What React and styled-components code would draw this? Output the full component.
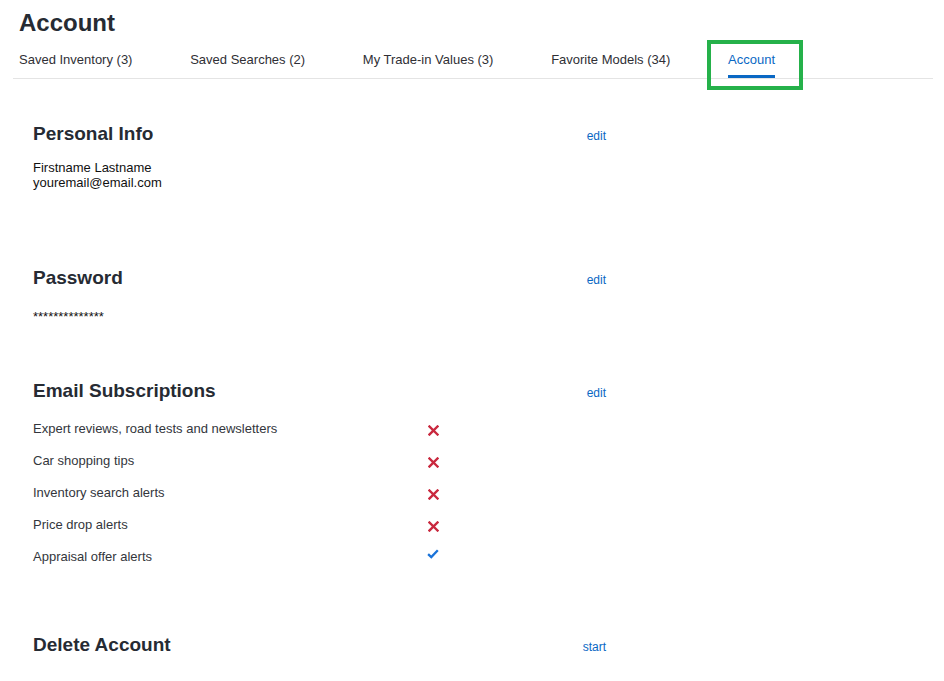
import React from "react";
import styled, { createGlobalStyle } from "styled-components";

const blue = "#0a68c4";
const ink = "#262b33";

const GlobalStyle = createGlobalStyle`
  html, body {
    margin: 0;
    padding: 0;
    background: #fff;
    font-family: "Liberation Sans", Arial, sans-serif;
    color: #222;
  }
`;

const tabs = [
  { label: "Saved Inventory (3)" },
  { label: "Saved Searches (2)" },
  { label: "My Trade-in Values (3)" },
  { label: "Favorite Models (34)" },
  { label: "Account", active: true },
];

const subscriptions = [
  { label: "Expert reviews, road tests and newsletters", on: false },
  { label: "Car shopping tips", on: false },
  { label: "Inventory search alerts", on: false },
  { label: "Price drop alerts", on: false },
  { label: "Appraisal offer alerts", on: true },
];

const Cross = () => (
  <svg width="11" height="11" viewBox="0 0 11 11">
    <path d="M1.5 1.5 L9.5 9.5 M9.5 1.5 L1.5 9.5" stroke="#c9283e" strokeWidth="2.4" strokeLinecap="square" />
  </svg>
);

const Check = () => (
  <svg width="14" height="12" viewBox="0 0 14 12">
    <path d="M1.3 6.2 L5 9.6 L12.6 1.6" stroke="#1a73d9" strokeWidth="2.7" fill="none" />
  </svg>
);

const App = () => {
  return (
    <>
      <GlobalStyle />
      <Page>
        <Header>
          <Title>Account</Title>
          <Tabs>
            {tabs.map((t) => (
              <Tab key={t.label} $active={t.active}>
                {t.label}
                {t.active && <Highlight />}
              </Tab>
            ))}
          </Tabs>
        </Header>

        <Content>
          <Section $space={76}>
            <SectionHead>
              <Heading>Personal Info</Heading>
              <Action href="#">edit</Action>
            </SectionHead>
            <Body $gap={14}>
              <Line>Firstname Lastname</Line>
              <Line>youremail@email.com</Line>
            </Body>
          </Section>

          <Section $space={55}>
            <SectionHead>
              <Heading>Password</Heading>
              <Action href="#">edit</Action>
            </SectionHead>
            <Body $gap={19}>
              <Line>**************</Line>
            </Body>
          </Section>

          <Section $space={69}>
            <SectionHead>
              <Heading>Email Subscriptions</Heading>
              <Action href="#">edit</Action>
            </SectionHead>
            <SubList>
              {subscriptions.map((s) => (
                <SubRow key={s.label}>
                  <SubLabel>{s.label}</SubLabel>
                  <SubIcon $on={s.on}>{s.on ? <Check /> : <Cross />}</SubIcon>
                </SubRow>
              ))}
            </SubList>
          </Section>

          <Section $space={20}>
            <SectionHead>
              <Heading>Delete Account</Heading>
              <Action href="#">start</Action>
            </SectionHead>
          </Section>
        </Content>
      </Page>
    </>
  );
};

const Page = styled.div`
  width: 944px;
  min-height: 681px;
`;

const Header = styled.div`
  margin: 0 11px 0 13px;
  padding: 9px 0 0 6px;
  border-bottom: 1px solid #e4e4e4;
`;

const Title = styled.h1`
  margin: 0;
  font-size: 24px;
  line-height: 28px;
  font-weight: 700;
  color: ${ink};
`;

const Tabs = styled.div`
  display: flex;
  gap: 57.75px;
  margin-top: 15px;
`;

const Tab = styled.div`
  position: relative;
  font-size: 13px;
  line-height: 15px;
  padding-bottom: 8px;
  color: ${(p) => (p.$active ? blue : "#2f2f35")};
  border-bottom: 3px solid ${(p) => (p.$active ? blue : "transparent")};
  white-space: nowrap;
`;

const Highlight = styled.span`
  position: absolute;
  left: -21px;
  right: -28px;
  top: -12px;
  bottom: -15px;
  border: 4px solid #25b14a;
  pointer-events: none;
`;

const Content = styled.div`
  padding: 43px 0 0 33px;
  width: 573px;
`;

const Section = styled.section`
  margin-bottom: ${(p) => p.$space}px;
`;

const SectionHead = styled.div`
  display: flex;
  justify-content: space-between;
  align-items: baseline;
`;

const Heading = styled.h2`
  margin: 0;
  font-size: 19px;
  line-height: 24px;
  font-weight: 700;
  color: ${ink};
`;

const Action = styled.a`
  font-size: 12px;
  font-weight: 400;
  color: ${blue};
  text-decoration: none;
`;

const Body = styled.div`
  margin-top: ${(p) => p.$gap}px;
`;

const Line = styled.div`
  font-size: 13px;
  line-height: 15px;
  color: #111;
`;

const SubList = styled.div`
  margin-top: 18px;
  display: flex;
  flex-direction: column;
  gap: 17px;
`;

const SubRow = styled.div`
  display: grid;
  grid-template-columns: 394px 12px;
  align-items: center;
  font-size: 13px;
  line-height: 15px;
  color: #33363c;
`;

const SubLabel = styled.span``;

const SubIcon = styled.span`
  display: flex;
  justify-content: center;
  margin-top: ${(p) => (p.$on ? "-5px" : "3px")};
`;

export default App;
